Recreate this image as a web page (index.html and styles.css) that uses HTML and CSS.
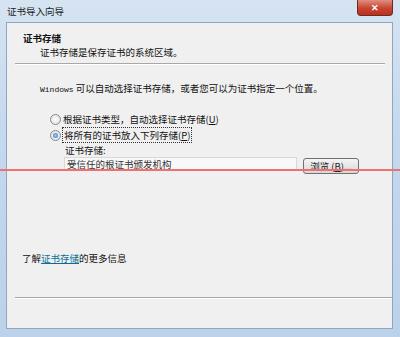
FILE: index.html
```html
<!DOCTYPE html>
<html lang="zh-CN">
<head>
    <meta charset="UTF-8">
    <title>证书导入向导</title>
    <link rel="stylesheet" href="styles.css">
</head>
<body>
    <div class="window">
        <div class="titlebar">
            <span class="title">证书导入向导</span>
            <span class="close">&#x2715;</span>
        </div>
        <div class="client">
            <div class="header">
                <div class="h-title">证书存储</div>
                <div class="h-sub">证书存储是保存证书的系统区域。</div>
            </div>
            <div class="sep"></div>
            <div class="content">
                <p class="intro"><span class="mono">Windows</span> 可以自动选择证书存储，或者您可以为证书指定一个位置。</p>
                <label class="radio"><span class="dot"></span>根据证书类型，自动选择证书存储(<u>U</u>)</label>
                <label class="radio checked"><span class="dot"></span><span class="focus">将所有的证书放入下列存储(<u>P</u>)</span></label>
                <div class="store">
                    <div class="store-label">证书存储:</div>
                    <div class="store-row">
                        <div class="textbox">受信任的根证书颁发机构</div>
                        <button class="btn">浏览 (<u>B</u>)...</button>
                    </div>
                </div>
            </div>
            <div class="more">了解<a href="#">证书存储</a>的更多信息</div>
            <div class="sep bottom"></div>
        </div>
        <div class="redline"></div>
    </div>
</body>
</html>
```

FILE: styles.css
```css
html, body {
    margin: 0;
    padding: 0;
}
body {
    width: 400px;
    height: 337px;
    overflow: hidden;
    font-family: "Noto Sans CJK SC", "Liberation Sans", sans-serif;
    font-size: 9.5px;
    color: #111;
}
.window {
    position: relative;
    height: 337px;
    display: flex;
    flex-direction: column;
    background: linear-gradient(#d6e4f2, #c4d8ee 40%, #bcd2ea);
    padding: 0 7px 8px 6px;
    box-sizing: border-box;
}
.titlebar {
    height: 22px;
    display: flex;
    align-items: flex-start;
    justify-content: space-between;
}
.title {
    margin-top: 4px;
    margin-left: 1px;
    line-height: 14px;
    color: #1e1e1e;
}
.close {
    width: 36px;
    height: 16px;
    background: linear-gradient(#e08e80, #c7442f 55%, #b8321e);
    border: 1px solid #6e2a22;
    border-top: none;
    border-radius: 0 0 4px 4px;
    color: #fff;
    font-size: 9px;
    font-weight: bold;
    text-align: center;
    line-height: 15px;
    box-sizing: border-box;
}
.client {
    flex: 1;
    background: #f0f0f0;
    border: 1px solid #8fa6bf;
    display: flex;
    flex-direction: column;
}
.header {
    padding: 8px 0 0 16px;
    height: 40px;
    box-sizing: border-box;
}
.h-title {
    font-weight: bold;
    line-height: 14px;
}
.h-sub {
    padding-left: 17px;
    line-height: 14px;
}
.sep {
    height: 1px;
    background: #a8a8a8;
    border-bottom: 1px solid #ffffff;
    margin: 0 7px 0 8px;
}
.content {
    padding: 16px 0 0 33px;
}
.intro {
    margin: 0 0 14px;
    line-height: 14px;
}
.mono {
    font-family: "Liberation Mono", monospace;
    font-size: 8px;
}
.radio {
    display: flex;
    align-items: center;
    height: 16px;
    margin-left: 10px;
}
.dot {
    width: 11px;
    height: 11px;
    border-radius: 50%;
    border: 1px solid #8a8a8a;
    background: radial-gradient(#ffffff, #d8d8d8);
    box-sizing: border-box;
    margin-right: 2px;
    position: relative;
}
.checked .dot::after {
    content: "";
    position: absolute;
    left: 2px;
    top: 2px;
    width: 5px;
    height: 5px;
    border-radius: 50%;
    background: radial-gradient(#9ad6ff, #1e6fc0);
}
.focus {
    outline: 1px dotted #333;
    padding: 0 1px;
}
.store {
    padding-left: 24px;
    margin-top: 1px;
}
.store-label {
    line-height: 13px;
    padding-left: 1px;
}
.store-row {
    display: flex;
    align-items: flex-start;
    gap: 6px;
}
.textbox {
    width: 233px;
    height: 14px;
    line-height: 12px;
    background: #f8f8f8;
    border: 1px solid #d8d8d8;
    padding-left: 2px;
    box-sizing: border-box;
    color: #333;
}
.btn {
    width: 56px;
    height: 16px;
    margin-top: 1px;
    padding: 0;
    font-family: inherit;
    font-size: 9.5px;
    color: #222;
    border: 1px solid #707070;
    border-radius: 3px;
    background: linear-gradient(#f4f4f4, #e6e6e6 50%, #d8d8d8);
    line-height: 13px;
    white-space: nowrap;
}
.more {
    margin-top: auto;
    margin-bottom: 32px;
    padding-left: 15px;
    line-height: 14px;
}
.more a {
    color: #0a6f96;
    text-decoration: underline;
}
.sep.bottom {
    margin: 0 0 29px 8px;
}
.redline {
    position: absolute;
    left: 0;
    right: 0;
    top: 169px;
    height: 1.5px;
    background: #f07070;
    z-index: 2;
}
```
